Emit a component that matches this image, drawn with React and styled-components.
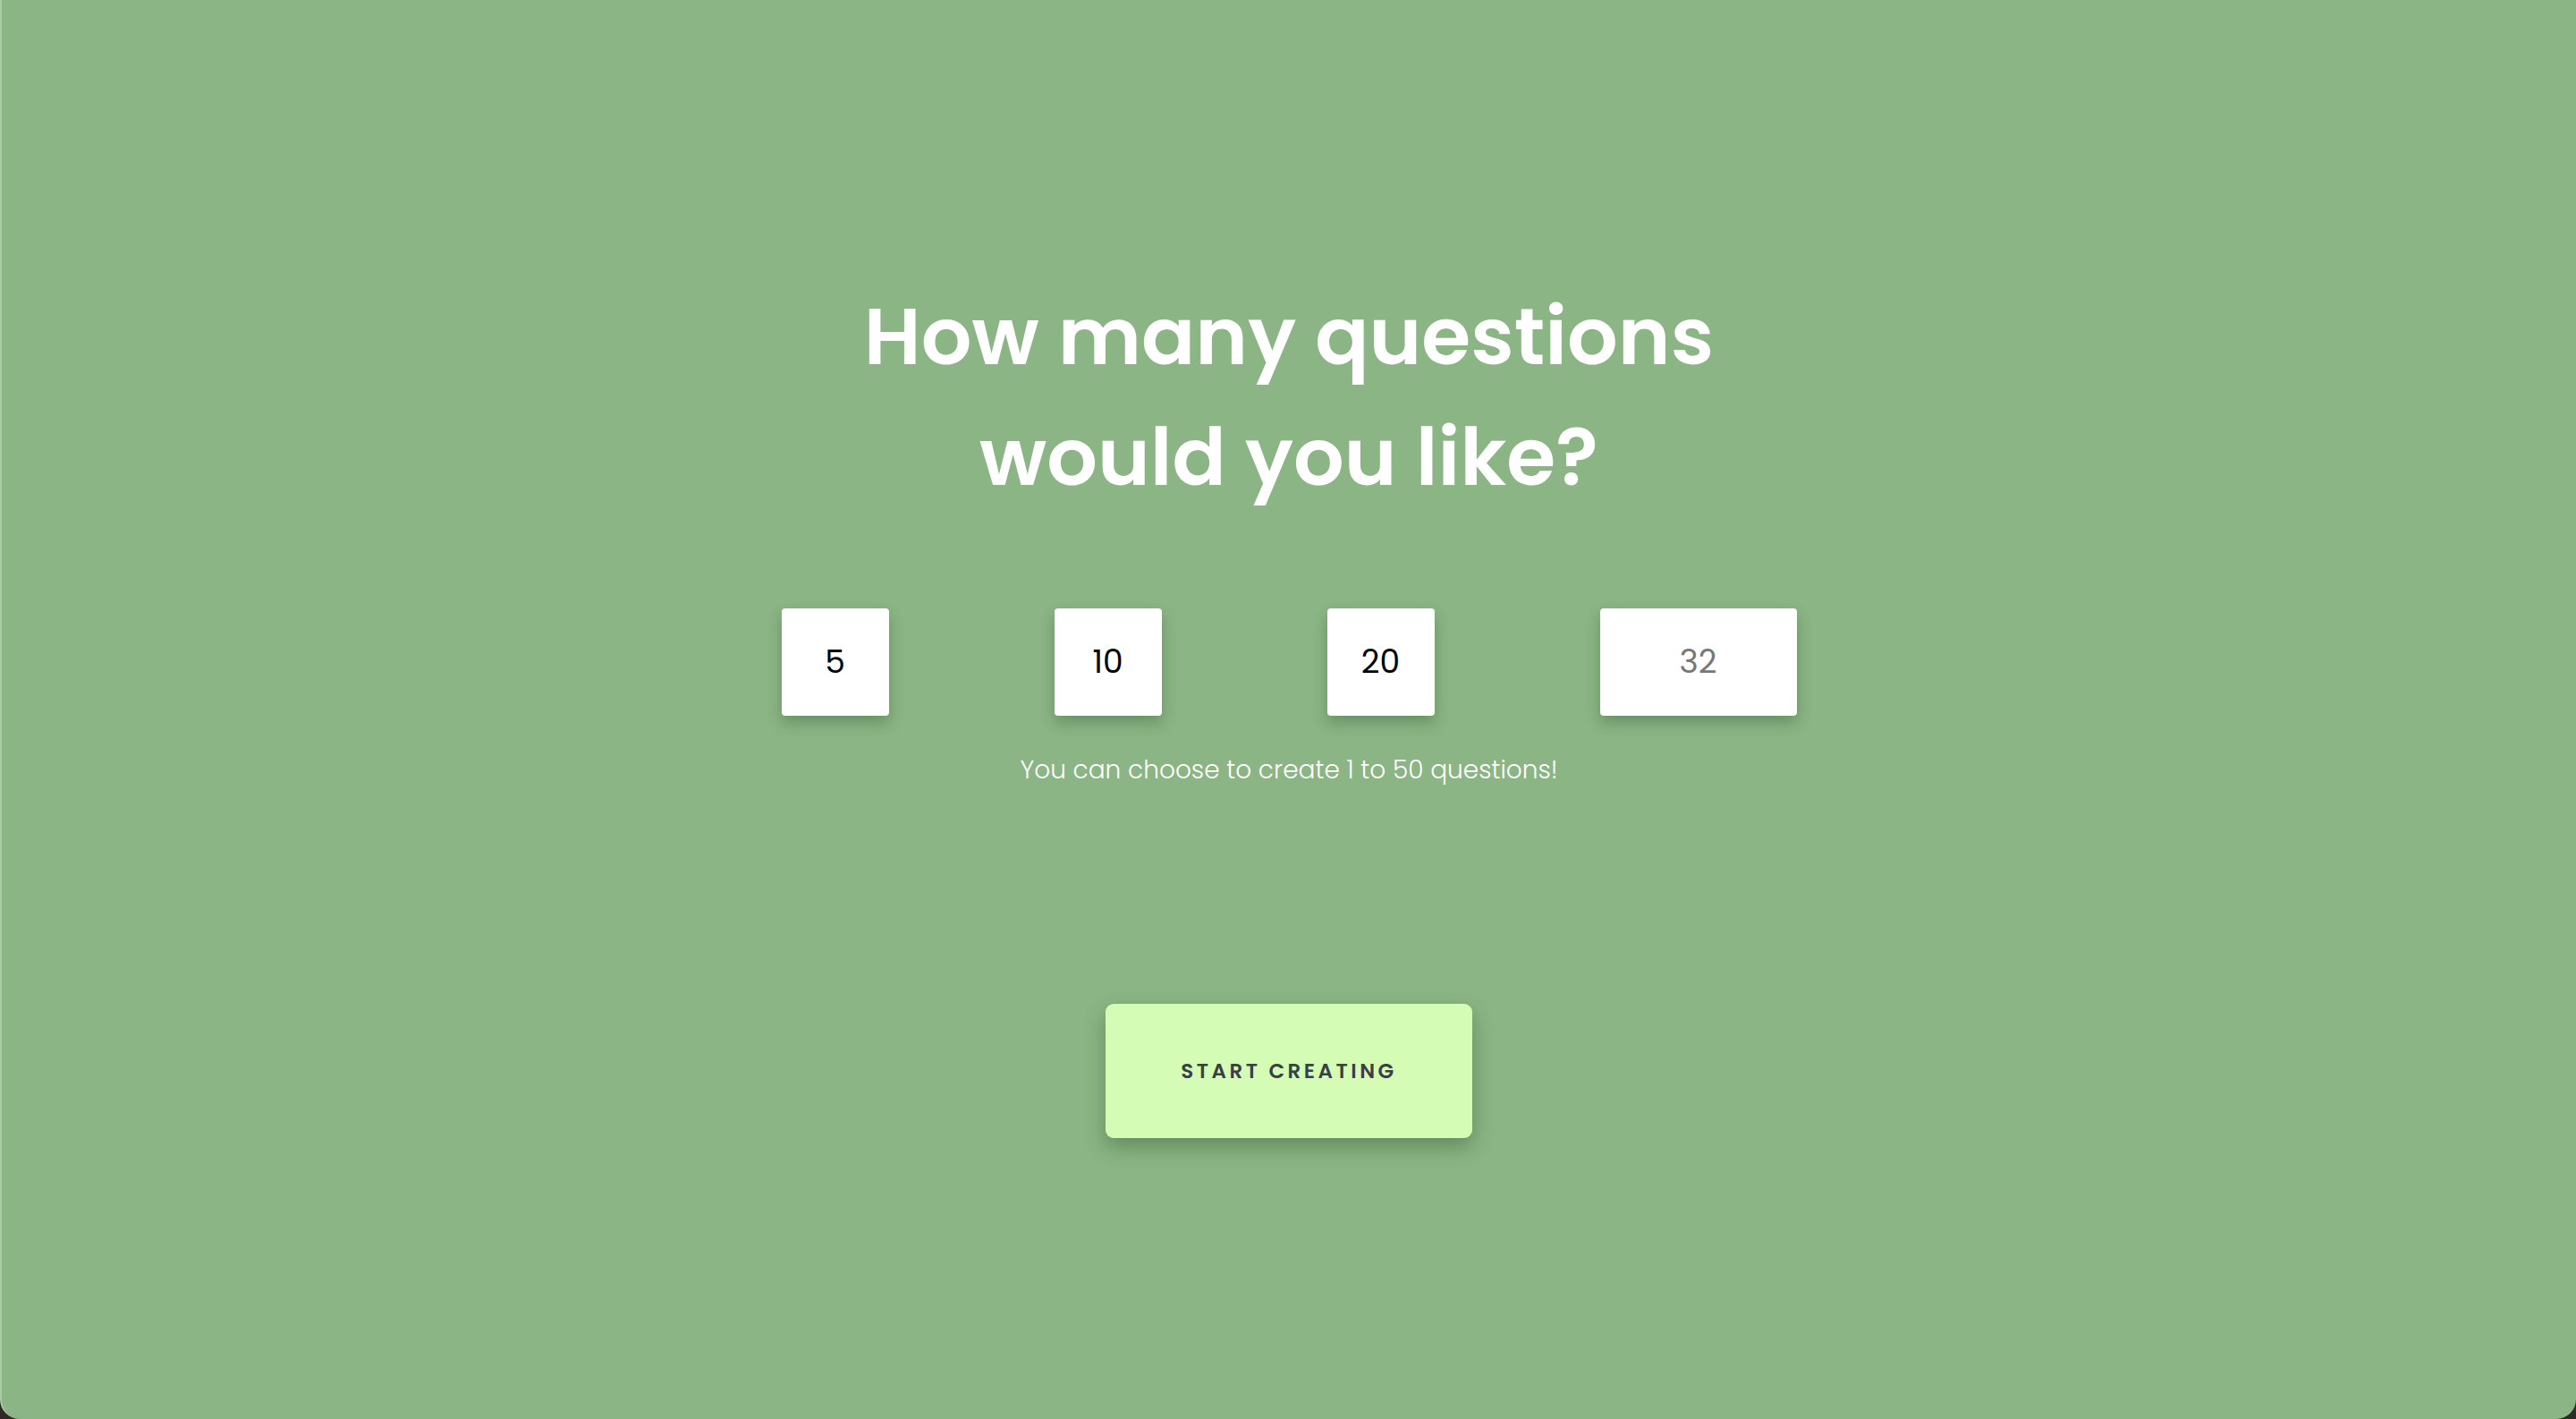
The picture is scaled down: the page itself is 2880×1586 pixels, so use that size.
import React, { useState } from 'react';
import styled, { createGlobalStyle } from 'styled-components';

const GlobalStyle = createGlobalStyle`
    * {
        box-sizing: border-box;
    }

    html, body {
        margin: 0;
        padding: 0;
        background-color: #2d2a28;
    }

    body {
        font-family: "Poppins", "Inter", "Liberation Sans", sans-serif;
    }
`;

const Page = styled.main`
    min-height: 100vh;
    padding-bottom: 6px;
    background-color: #8bb584;
    border-left: 2px solid #a9caa3;
    border-radius: 0 0 22px 22px;

    display: flex;
    flex-direction: column;
    align-items: center;
    justify-content: center;
`;

const Title = styled.h1`
    width: 1100px;
    margin: 0;
    font-size: 89px;
    line-height: 135px;
    font-weight: 600;
    color: #ffffff;
    text-align: center;
`;

const Options = styled.div`
    margin-top: 101px;
    display: flex;
    gap: 185px;
`;

const Option = styled.button`
    width: 120px;
    height: 120px;
    border: none;
    border-radius: 4px;
    background-color: ${props => (props.$active ? '#f3fbee' : '#ffffff')};
    box-shadow: 0 8px 16px rgba(30, 60, 30, 0.3);
    font-family: inherit;
    font-size: 36px;
    font-weight: 400;
    color: #000;
    cursor: pointer;
`;

const CustomInput = styled.input`
    width: 220px;
    height: 120px;
    padding: 0;
    border: none;
    border-radius: 4px;
    background-color: #ffffff;
    box-shadow: 0 8px 16px rgba(30, 60, 30, 0.3);
    font-family: inherit;
    font-size: 36px;
    text-align: center;
    outline: none;
    -moz-appearance: textfield;

    &::-webkit-outer-spin-button,
    &::-webkit-inner-spin-button {
        -webkit-appearance: none;
        margin: 0;
    }

    &::placeholder {
        color: #777;
    }
`;

const Hint = styled.p`
    margin: 40px 0 0 0;
    font-size: 28px;
    line-height: 42px;
    font-weight: 300;
    color: #ffffff;
`;

const StartButton = styled.button`
    margin-top: 240px;
    width: 410px;
    height: 150px;
    border: none;
    border-radius: 9px;
    background-color: #d4fcb4;
    box-shadow: 0 10px 22px rgba(30, 60, 30, 0.35);
    font-family: inherit;
    font-size: 23px;
    font-weight: 600;
    letter-spacing: 3.5px;
    color: #3a3f47;
    cursor: pointer;
`;

const App = () => {
    const [count, setCount] = useState(null);

    return (
        <>
            <GlobalStyle />
            <Page>
                <Title>How many questions would you like?</Title>
                <Options>
                    {[5, 10, 20].map(n => (
                        <Option key={n} $active={count === n} onClick={() => setCount(n)}>
                            {n}
                        </Option>
                    ))}
                    <CustomInput type="number" placeholder="32" min={1} max={50} />
                </Options>
                <Hint>You can choose to create 1 to 50 questions!</Hint>
                <StartButton>START CREATING</StartButton>
            </Page>
        </>
    );
};

export default App;
